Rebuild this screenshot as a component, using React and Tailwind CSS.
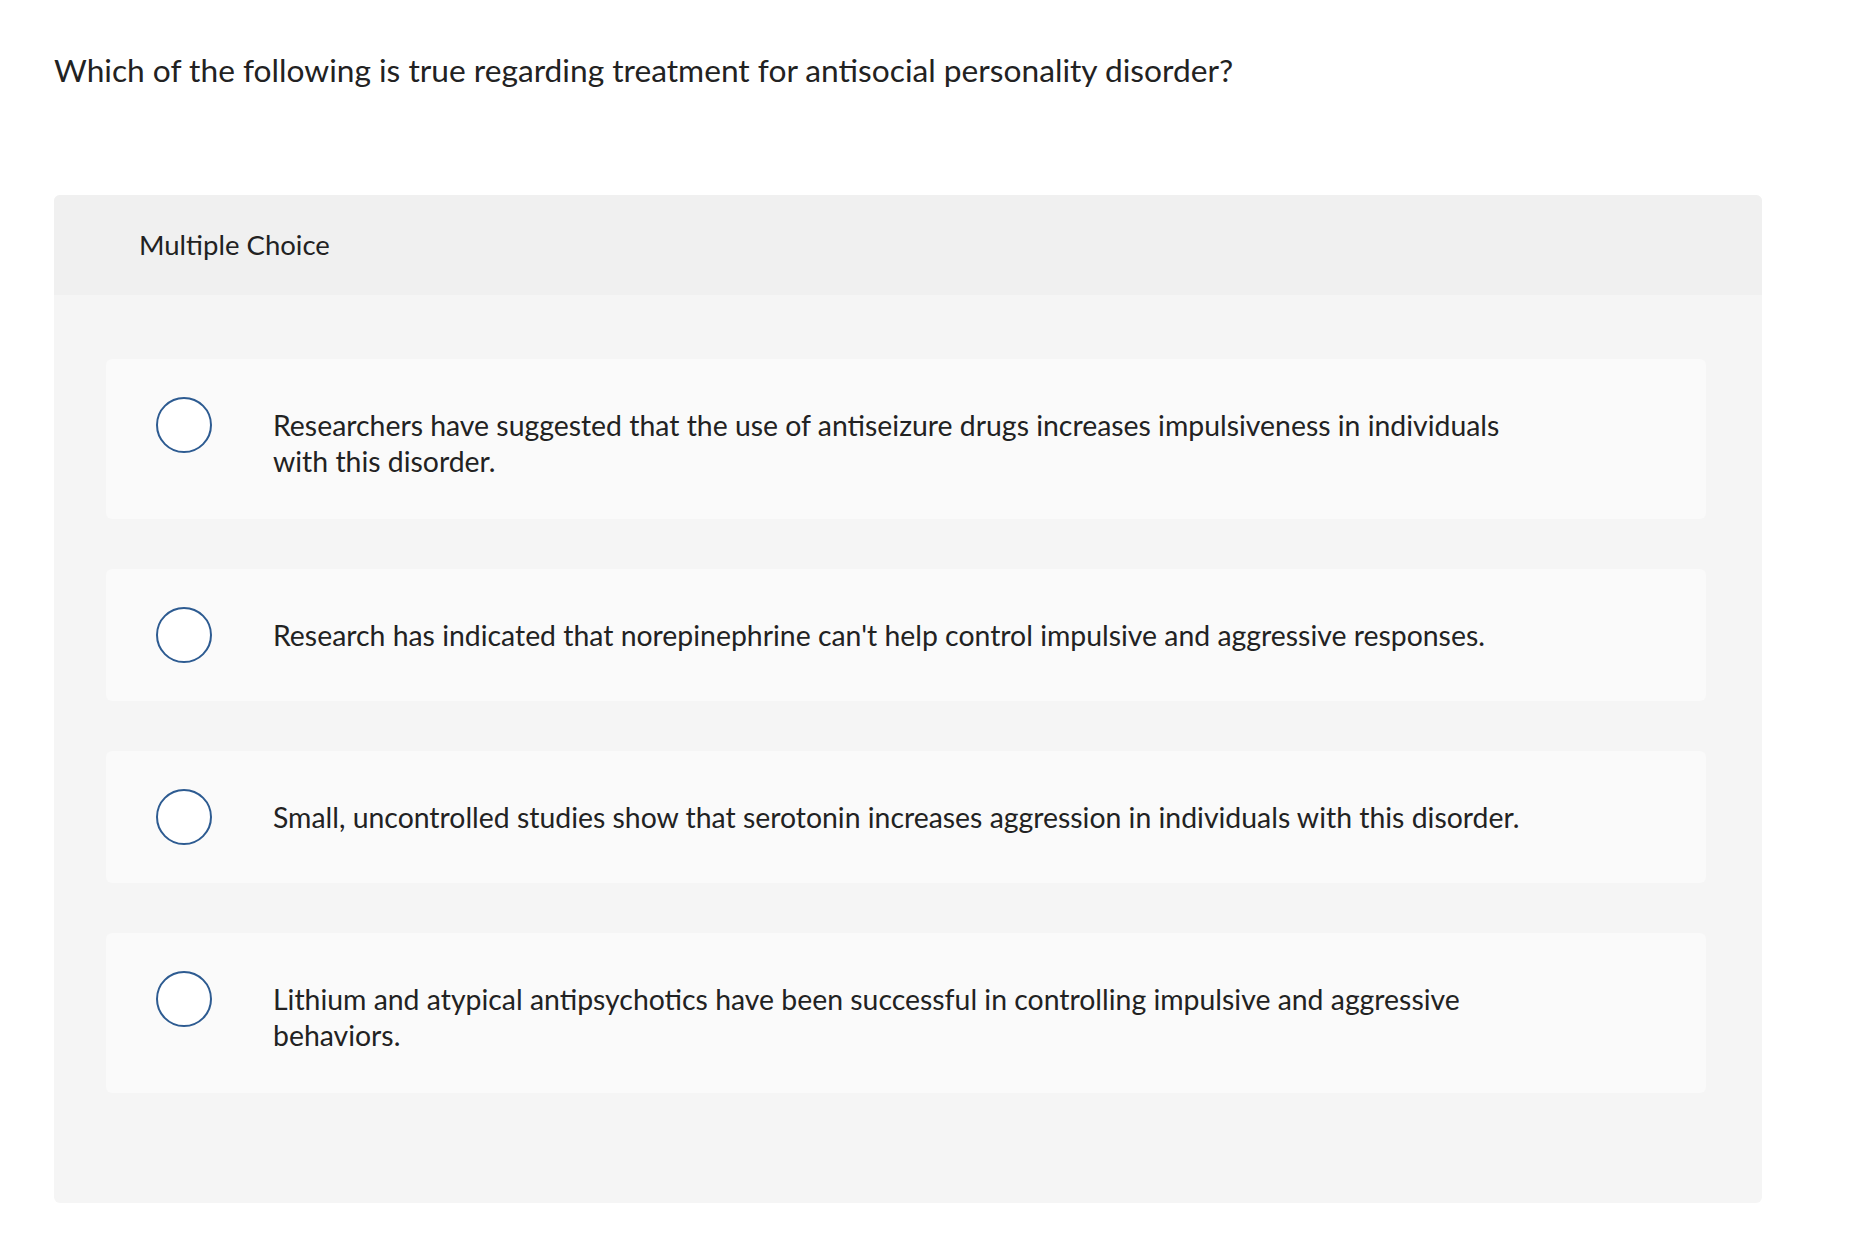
const options = [
  "Researchers have suggested that the use of antiseizure drugs increases impulsiveness in individuals with this disorder.",
  "Research has indicated that norepinephrine can't help control impulsive and aggressive responses.",
  "Small, uncontrolled studies show that serotonin increases aggression in individuals with this disorder.",
  "Lithium and atypical antipsychotics have been successful in controlling impulsive and aggressive behaviors.",
];

function Option({ text }) {
  return (
    <div className="flex items-start rounded-md bg-[#fafafa] py-[38px] pl-[50px]">
      <div className="h-[56px] w-[56px] shrink-0 rounded-full border-2 border-[#2d5b91] bg-white" />
      <p className="mb-[2px] ml-[61px] mt-[10px] max-w-[1265px] text-[28.4px] leading-[36px] text-[#222]">{text}</p>
    </div>
  );
}

export default function App() {
  return (
    <div
      className="min-h-screen bg-white pl-[54px] pt-[50px] text-[#222]"
      style={{ fontFamily: "Lato, 'Open Sans', sans-serif" }}
    >
      <h1 className="text-[31.7px] leading-[40px]">
        Which of the following is true regarding treatment for antisocial personality disorder?
      </h1>
      <div className="mt-[105px] w-[1708px] rounded-md bg-[#f5f5f5]">
        <div className="flex h-[100px] items-center rounded-t-md bg-[#f0f0f0] pl-[85px] text-[27.5px]">
          Multiple Choice
        </div>
        <div className="flex flex-col gap-[50px] pb-[110px] pl-[52px] pr-[56px] pt-[64px]">
          {options.map((o) => (
            <Option key={o} text={o} />
          ))}
        </div>
      </div>
    </div>
  );
}
